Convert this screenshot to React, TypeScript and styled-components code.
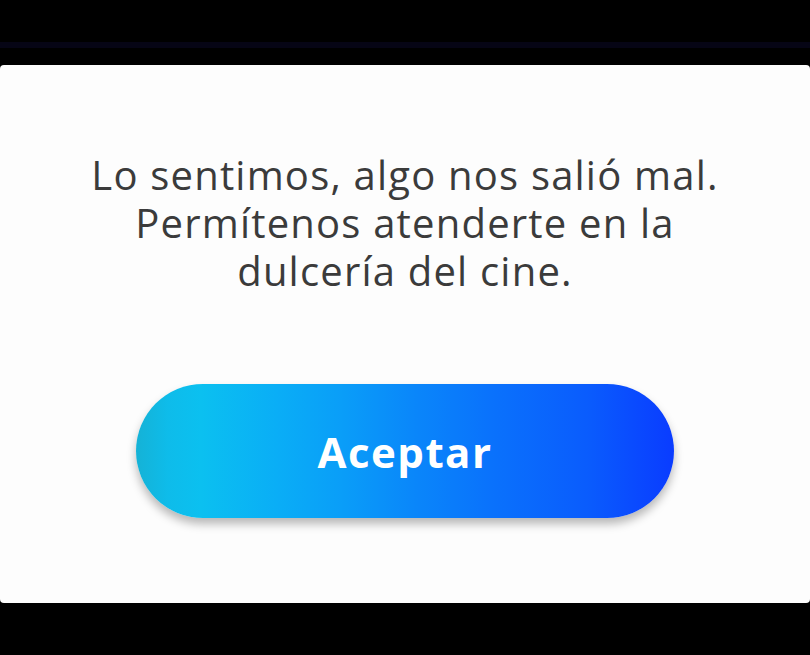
import React from 'react';
import styled, { createGlobalStyle } from 'styled-components';

const GlobalStyle = createGlobalStyle`
  html, body {
    margin: 0;
    padding: 0;
    background: #000;
  }
  * {
    box-sizing: border-box;
  }
`;

const Screen = styled.div`
  width: 810px;
  height: 655px;
  display: flex;
  flex-direction: column;
  background: #000;
  overflow: hidden;
`;

const TopBar = styled.div`
  height: 65px;
  display: flex;
  flex-direction: column;
  justify-content: flex-end;
  padding-bottom: 17px;
`;

const Glow = styled.div`
  height: 6px;
  background: #060515;
`;

const Card = styled.div`
  height: 538px;
  background: #fdfdfd;
  border-radius: 4px;
  display: flex;
  flex-direction: column;
  align-items: center;
  padding-top: 86px;
`;

const Message = styled.p`
  margin: 0;
  font-family: 'Open Sans', 'DejaVu Sans', sans-serif;
  font-size: 40px;
  line-height: 48px;
  font-weight: 400;
  color: #3b3b3b;
  text-align: center;
  letter-spacing: 1.2px;
`;

const Line = styled.span`
  display: block;
  height: 48px;
`;

const AcceptButton = styled.button`
  margin-top: 89px;
  width: 538px;
  height: 134px;
  border: none;
  border-radius: 67px;
  background: linear-gradient(
    90deg,
    #15b2d6 0%,
    #0ebcea 6%,
    #0bc0f0 12%,
    #0aaef6 26%,
    #0a9ef8 38%,
    #0a86fa 52%,
    #0a72fc 66%,
    #0a5cfd 84%,
    #0a3cff 100%
  );
  box-shadow: 0 6px 10px rgba(0, 0, 0, 0.28);
  color: #fff;
  font-family: 'Open Sans', 'DejaVu Sans', sans-serif;
  font-size: 42px;
  font-weight: 700;
  letter-spacing: 1.5px;
  padding: 0;
  cursor: pointer;
`;

export default function App() {
  return (
    <>
      <GlobalStyle />
      <Screen>
        <TopBar>
          <Glow />
        </TopBar>
        <Card>
          <Message>
            <Line>Lo sentimos, algo nos salió mal.</Line>
            <Line>Permítenos atenderte en la</Line>
            <Line>dulcería del cine.</Line>
          </Message>
          <AcceptButton>Aceptar</AcceptButton>
        </Card>
      </Screen>
    </>
  );
}
